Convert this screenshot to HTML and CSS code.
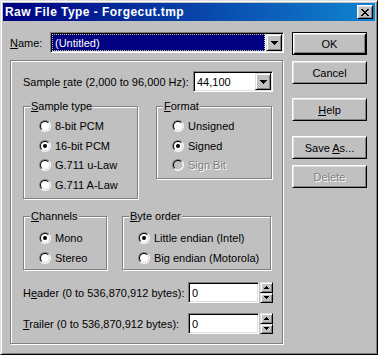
FILE: index.html
```html
<!DOCTYPE html>
<html lang="en">
<head>
    <meta charset="UTF-8">
    <title>Raw File Type</title>
    <link rel="stylesheet" href="styles.css">
</head>
<body>
<div class="window">
    <div class="titlebar">
        <span class="titlebar__text">Raw File Type - Forgecut.tmp</span>
        <span class="titlebar__close">
            <svg width="8" height="7" viewBox="0 0 8 7"><path d="M0 0h2v1h1v1h2v-1h1v-1h2v1h-1v1h-1v1h-1v1h1v1h1v1h1v1h-2v-1h-1v-1h-2v1h-1v1h-2v-1h1v-1h1v-1h1v-1h-1v-1h-1v-1h-1z"/></svg>
        </span>
    </div>

    <div class="dialog">
        <div class="main">
            <div class="name-row">
                <span class="name-row__label"><u>N</u>ame:</span>
                <div class="combo combo_name">
                    <span class="combo__selected">(Untitled)</span>
                    <span class="arrow-btn">
                        <svg width="7" height="4" viewBox="0 0 7 4"><path d="M0 0h7v1h-1v1h-1v1h-1v1h-1v-1h-1v-1h-1v-1h-1z"/></svg>
                    </span>
                </div>
            </div>

            <div class="panel">
                <div class="rate-row">
                    <span>Sample <u>r</u>ate (2,000 to 96,000 Hz):</span>
                    <div class="combo combo_rate">
                        <span class="combo__value">44,100</span>
                        <span class="arrow-btn">
                            <svg width="7" height="4" viewBox="0 0 7 4"><path d="M0 0h7v1h-1v1h-1v1h-1v1h-1v-1h-1v-1h-1v-1h-1z"/></svg>
                        </span>
                    </div>
                </div>

                <div class="groups groups_top">
                    <fieldset class="group group_sample">
                        <legend class="group__title"><u>S</u>ample type</legend>
                        <div class="group__items">
                            <div class="radio"><span class="radio__dot"></span>8-bit PCM</div>
                            <div class="radio radio_checked"><span class="radio__dot"></span>16-bit PCM</div>
                            <div class="radio"><span class="radio__dot"></span>G.711 u-Law</div>
                            <div class="radio"><span class="radio__dot"></span>G.711 A-Law</div>
                        </div>
                    </fieldset>
                    <fieldset class="group group_format">
                        <legend class="group__title"><u>F</u>ormat</legend>
                        <div class="group__items">
                            <div class="radio"><span class="radio__dot"></span>Unsigned</div>
                            <div class="radio radio_checked"><span class="radio__dot"></span>Signed</div>
                            <div class="radio radio_disabled"><span class="radio__dot"></span>Sign Bit</div>
                        </div>
                    </fieldset>
                </div>

                <div class="groups groups_bottom">
                    <fieldset class="group group_channels">
                        <legend class="group__title"><u>C</u>hannels</legend>
                        <div class="group__items">
                            <div class="radio radio_checked"><span class="radio__dot"></span>Mono</div>
                            <div class="radio"><span class="radio__dot"></span>Stereo</div>
                        </div>
                    </fieldset>
                    <fieldset class="group group_order">
                        <legend class="group__title"><u>B</u>yte order</legend>
                        <div class="group__items">
                            <div class="radio radio_checked"><span class="radio__dot"></span>Little endian (Intel)</div>
                            <div class="radio"><span class="radio__dot"></span>Big endian (Motorola)</div>
                        </div>
                    </fieldset>
                </div>

                <div class="field-row field-row_header">
                    <span>H<u>e</u>ader (0 to 536,870,912 bytes):</span>
                    <div class="spin-field">
                        <span class="edit">0</span>
                        <span class="spin">
                            <span class="spin__btn"><svg width="5" height="3" viewBox="0 0 5 3"><path d="M2 0h1v1h1v1h1v1h-5v-1h1v-1h1z"/></svg></span>
                            <span class="spin__btn"><svg width="5" height="3" viewBox="0 0 5 3"><path d="M0 0h5v1h-1v1h-1v1h-1v-1h-1v-1h-1z"/></svg></span>
                        </span>
                    </div>
                </div>
                <div class="field-row field-row_trailer">
                    <span><u>T</u>railer (0 to 536,870,912 bytes):</span>
                    <div class="spin-field">
                        <span class="edit">0</span>
                        <span class="spin">
                            <span class="spin__btn"><svg width="5" height="3" viewBox="0 0 5 3"><path d="M2 0h1v1h1v1h1v1h-5v-1h1v-1h1z"/></svg></span>
                            <span class="spin__btn"><svg width="5" height="3" viewBox="0 0 5 3"><path d="M0 0h5v1h-1v1h-1v1h-1v-1h-1v-1h-1z"/></svg></span>
                        </span>
                    </div>
                </div>
            </div>
        </div>

        <div class="buttons">
            <span class="btn btn_default"><span>OK</span></span>
            <span class="btn btn_cancel"><span>Cancel</span></span>
            <span class="btn btn_help"><span><u>H</u>elp</span></span>
            <span class="btn btn_save"><span>Save <u>A</u>s...</span></span>
            <span class="btn btn_delete btn_disabled"><span>Delete</span></span>
        </div>
    </div>
</div>
</body>
</html>
```

FILE: styles.css
```css
* {
    box-sizing: border-box;
}
body {
    margin: 0;
    background: #c0c0c0;
    font-family: "Liberation Sans", Arial, sans-serif;
    font-size: 11px;
    color: #000;
}
u {
    text-underline-offset: 1px;
}
svg {
    display: block;
    shape-rendering: crispEdges;
}

.window {
    width: 378px;
    height: 355px;
    padding: 2px;
    border: 1px solid;
    border-color: #dfdfdf #000 #000 #dfdfdf;
    box-shadow: inset 1px 1px #fff, inset -1px -1px #808080;
    background: #c0c0c0;
}

.titlebar {
    display: flex;
    align-items: center;
    justify-content: space-between;
    height: 18px;
    padding: 0 2px;
    background: linear-gradient(to right, #000080, #1084d0);
}
.titlebar__text {
    color: #fff;
    font-weight: bold;
    font-size: 12px;
    letter-spacing: 0.45px;
}
.titlebar__close {
    display: flex;
    align-items: center;
    justify-content: center;
    width: 16px;
    height: 14px;
    padding: 1px 1px 0 0;
    border: 1px solid;
    border-color: #fff #000 #000 #fff;
    box-shadow: inset 1px 1px #dfdfdf, inset -1px -1px #808080;
    background: #c0c0c0;
}

.dialog {
    display: flex;
    padding: 11px 0 0 7px;
}
.main {
    width: 274px;
}
.name-row {
    display: flex;
    align-items: center;
    height: 21px;
}
.name-row__label {
    width: 40px;
}

/* sunken field */
.combo,
.edit {
    display: flex;
    align-items: center;
    height: 21px;
    padding: 1px;
    border: 1px solid;
    border-color: #808080 #fff #fff #808080;
    box-shadow: inset 1px 1px #000, inset -1px -1px #dfdfdf;
    background: #fff;
}
.combo_name {
    width: 234px;
}
.combo_rate {
    width: 80px;
}
.combo__selected {
    flex: 1;
    align-self: stretch;
    display: flex;
    align-items: center;
    margin-right: 1px;
    padding-left: 2px;
    background: #000080;
    color: #fff;
    border: 1px dotted #c8c890;
}
.combo__value {
    flex: 1;
    padding-left: 2px;
}
.arrow-btn {
    display: flex;
    align-items: center;
    justify-content: center;
    width: 16px;
    height: 17px;
    border: 1px solid;
    border-color: #dfdfdf #000 #000 #dfdfdf;
    box-shadow: inset 1px 1px #fff, inset -1px -1px #808080;
    background: #c0c0c0;
}

.panel {
    width: 273px;
    height: 284px;
    margin-top: 7px;
    padding: 10px 9px 0 12px;
    border: 1px solid #808080;
    box-shadow: inset 1px 1px #fff, 1px 1px #fff;
}
.rate-row {
    display: flex;
    align-items: center;
    justify-content: space-between;
    height: 21px;
}

.groups {
    display: flex;
    justify-content: space-between;
    align-items: flex-start;
}
.groups_top {
    margin-top: 8px;
}
.groups_bottom {
    margin-top: 11px;
}
.group {
    margin: 0;
    padding: 7px 0 0 0;
    border: 1px solid #808080;
    box-shadow: inset 1px 1px #fff, 1px 1px #fff;
}
.group__title {
    padding: 0 1px;
    margin-left: 6px;
    height: 13px;
    line-height: 13px;
    background: #c0c0c0;
}
.group__items {
    display: flex;
    flex-direction: column;
    gap: 7.5px;
    padding-left: 15px;
}
.group_sample {
    width: 115px;
    height: 99px;
}
.group_format {
    width: 116px;
    height: 79px;
    margin-right: 1px;
}
.group_channels {
    width: 84px;
    height: 60px;
    padding-top: 9px;
}
.group_order {
    width: 149px;
    height: 60px;
    margin-right: 2px;
    padding-top: 9px;
}

.radio {
    display: flex;
    align-items: center;
    gap: 4px;
    height: 12px;
    white-space: nowrap;
}
.radio__dot {
    position: relative;
    flex: none;
    width: 12px;
    height: 12px;
    border-radius: 50%;
    border: 1px solid;
    border-color: #808080 #fff #fff #808080;
}
.radio__dot::before {
    content: "";
    position: absolute;
    inset: 0;
    border-radius: 50%;
    border: 1px solid;
    border-color: #000 #dfdfdf #dfdfdf #000;
    background: #fff;
}
.radio_checked .radio__dot::after {
    content: "";
    position: absolute;
    left: 3px;
    top: 3px;
    width: 4px;
    height: 4px;
    border-radius: 50%;
    background: #000;
}
.radio_disabled {
    color: #808080;
    text-shadow: 1px 1px 0 #fff;
}
.radio_disabled .radio__dot::before {
    background: #c0c0c0;
}

.field-row {
    display: flex;
    align-items: center;
    justify-content: space-between;
    height: 21px;
}
.field-row_header {
    margin-top: 12px;
}
.field-row_trailer {
    margin-top: 10px;
}
.spin-field {
    display: flex;
    gap: 1px;
}
.edit {
    width: 71px;
    padding-left: 3px;
}
.spin {
    display: flex;
    flex-direction: column;
    width: 13px;
    height: 21px;
}
.spin__btn {
    display: flex;
    align-items: center;
    justify-content: center;
    flex: 1;
    border: 1px solid;
    border-color: #dfdfdf #000 #000 #dfdfdf;
    box-shadow: inset 1px 1px #fff, inset -1px -1px #808080;
    background: #c0c0c0;
}

.buttons {
    display: flex;
    flex-direction: column;
    width: 75px;
    margin-left: 8px;
}
.btn {
    display: flex;
    align-items: center;
    justify-content: center;
    height: 23px;
    border: 1px solid;
    border-color: #fff #000 #000 #fff;
    box-shadow: inset 1px 1px #dfdfdf, inset -1px -1px #808080;
}
.btn_default {
    border-color: #000;
    box-shadow: inset 1px 1px #fff, inset -1px -1px #000, inset 2px 2px #dfdfdf, inset -2px -2px #808080;
}
.btn_cancel {
    margin-top: 6px;
}
.btn_help {
    margin-top: 14px;
}
.btn_save {
    margin-top: 15px;
}
.btn_delete {
    margin-top: 6px;
}
.btn_disabled {
    color: #808080;
    text-shadow: 1px 1px 0 #fff;
}
```
